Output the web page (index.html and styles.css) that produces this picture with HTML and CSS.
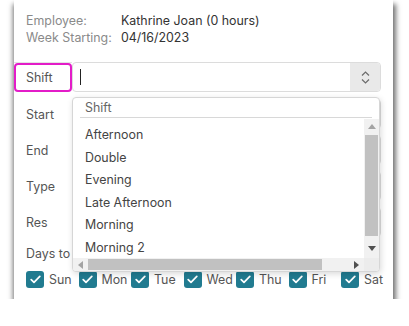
FILE: index.html
```html
<!DOCTYPE html>
<html lang="en">
<head>
<meta charset="utf-8">
<title>Shift</title>
<link rel="stylesheet" href="styles.css">
</head>
<body>
<div class="page">
  <div class="panel">
    <div class="info">
      <span class="k">Employee:</span><span class="v">Kathrine Joan (0 hours)</span>
      <span class="k">Week Starting:</span><span class="v">04/16/2023</span>
    </div>
    <div class="form">
      <div class="row row-shift">
        <div class="lbl-wrap"><label class="lbl hl">Shift</label></div>
        <div class="select">
          <div class="sel-input"><span class="caret"></span></div>
          <div class="sel-btn">
            <svg width="9" height="13" viewBox="0 0 9 13"><path d="M1 4.5 L4.5 1 L8 4.5 M1 8.5 L4.5 12 L8 8.5" stroke="#6b6b6b" stroke-width="1.2" fill="none"/></svg>
          </div>
          <div class="dropdown">
            <div class="dd-search"><div class="dd-input">Shift</div></div>
            <div class="dd-body">
              <div class="dd-list">
                <div class="item">Afternoon</div>
                <div class="item">Double</div>
                <div class="item">Evening</div>
                <div class="item">Late Afternoon</div>
                <div class="item">Morning</div>
                <div class="item">Morning 2</div>
              </div>
              <div class="vbar">
                <div class="vbtn"><svg width="8" height="5" viewBox="0 0 8 5"><polygon points="0,5 4,0 8,5" fill="#a3a3a3"/></svg></div>
                <div class="vtrack"><div class="vthumb"></div></div>
                <div class="vbtn vbtn-down"><svg width="8" height="5" viewBox="0 0 8 5"><polygon points="0,0 4,5 8,0" fill="#505050"/></svg></div>
              </div>
              <div class="hbar">
                <div class="hbtn"><svg width="5" height="8" viewBox="0 0 5 8"><polygon points="5,0 0,4 5,8" fill="#a3a3a3"/></svg></div>
                <div class="hthumb"></div>
                <div class="hspace"></div>
                <div class="hbtn"><svg width="5" height="8" viewBox="0 0 5 8"><polygon points="0,0 5,4 0,8" fill="#505050"/></svg></div>
              </div>
              <div class="corner"></div>
            </div>
          </div>
        </div>
      </div>
      <div class="row"><label class="lbl">Start</label><div class="field"></div></div>
      <div class="row"><label class="lbl">End</label><div class="field"></div></div>
      <div class="row"><label class="lbl">Type</label><div class="field"></div></div>
      <div class="row"><label class="lbl">Res</label><div class="field"></div></div>
      <div class="days-label">Days to</div>
      <div class="days">
        <div class="day"><span class="cb"><svg width="11" height="9" viewBox="0 0 11 9"><path d="M1.2 4.6 L4 7.4 L9.8 1.4" stroke="#fff" stroke-width="1.7" fill="none" stroke-linecap="round" stroke-linejoin="round"/></svg></span>Sun</div>
        <div class="day"><span class="cb"><svg width="11" height="9" viewBox="0 0 11 9"><path d="M1.2 4.6 L4 7.4 L9.8 1.4" stroke="#fff" stroke-width="1.7" fill="none" stroke-linecap="round" stroke-linejoin="round"/></svg></span>Mon</div>
        <div class="day"><span class="cb"><svg width="11" height="9" viewBox="0 0 11 9"><path d="M1.2 4.6 L4 7.4 L9.8 1.4" stroke="#fff" stroke-width="1.7" fill="none" stroke-linecap="round" stroke-linejoin="round"/></svg></span>Tue</div>
        <div class="day"><span class="cb"><svg width="11" height="9" viewBox="0 0 11 9"><path d="M1.2 4.6 L4 7.4 L9.8 1.4" stroke="#fff" stroke-width="1.7" fill="none" stroke-linecap="round" stroke-linejoin="round"/></svg></span>Wed</div>
        <div class="day"><span class="cb"><svg width="11" height="9" viewBox="0 0 11 9"><path d="M1.2 4.6 L4 7.4 L9.8 1.4" stroke="#fff" stroke-width="1.7" fill="none" stroke-linecap="round" stroke-linejoin="round"/></svg></span>Thu</div>
        <div class="day"><span class="cb"><svg width="11" height="9" viewBox="0 0 11 9"><path d="M1.2 4.6 L4 7.4 L9.8 1.4" stroke="#fff" stroke-width="1.7" fill="none" stroke-linecap="round" stroke-linejoin="round"/></svg></span>Fri</div>
        <div class="day"><span class="cb"><svg width="11" height="9" viewBox="0 0 11 9"><path d="M1.2 4.6 L4 7.4 L9.8 1.4" stroke="#fff" stroke-width="1.7" fill="none" stroke-linecap="round" stroke-linejoin="round"/></svg></span>Sat</div>
      </div>
    </div>
  </div>
</div>
</body>
</html>
```

FILE: styles.css
```css
* { box-sizing: border-box; }

body {
  margin: 0;
  background: #fff;
  font-family: Inter, "Noto Sans", "Liberation Sans", sans-serif;
  font-size: 12.4px;
  color: #333;
}

.page {
  padding-left: 14px;
}

.panel {
  width: 379px;
  height: 299px;
  background: #fff;
  box-shadow: 1px 6px 5px 2px rgba(0, 0, 0, 0.55);
  padding-top: 12px;
}

.info {
  display: grid;
  grid-template-columns: 95px auto;
  line-height: 17px;
  padding-left: 12px;
}

.k { color: #8a8a8a; }
.v { color: #333; }

.form {
  margin-top: 16px;
  display: flex;
  flex-direction: column;
}

.row {
  display: grid;
  grid-template-columns: 58px 309px;
  height: 30px;
  margin-bottom: 6px;
}

.row-shift {
  margin-bottom: 7px;
  position: relative;
  z-index: 2;
}

.lbl-wrap {
  border-top: 1px solid #e3e3e3;
  display: flex;
}

.lbl {
  padding-left: 12px;
  display: flex;
  align-items: center;
  color: #555;
}

.lbl.hl {
  flex: 1;
  border: 2px solid #e31cc8;
  border-radius: 4px;
  padding-left: 10px;
}

.field {
  border: 1px solid #dcdcdc;
  border-radius: 4px;
}

.select {
  position: relative;
  display: flex;
  height: 30px;
  border: 1px solid #dcdcdc;
  border-radius: 4px;
}

.sel-input {
  flex: 1;
  display: flex;
  align-items: center;
  padding-left: 7px;
}

.caret {
  width: 1px;
  height: 16px;
  background: #222;
}

.sel-btn {
  width: 30px;
  background: #e9e9e9;
  display: flex;
  align-items: center;
  justify-content: center;
  border-radius: 0 3px 3px 0;
}

.dropdown {
  position: absolute;
  top: 34px;
  left: -1px;
  width: 308px;
  height: 175px;
  border: 1px solid #d6d6d6;
  border-radius: 4px;
  background: #fff;
  box-shadow: 1px 2px 6px rgba(0, 0, 0, 0.15);
  overflow: hidden;
  display: flex;
  flex-direction: column;
}

.dd-search {
  height: 21px;
  padding: 0 7px;
}

.dd-input {
  height: 20px;
  line-height: 19px;
  border-bottom: 1px solid #d8d8d8;
  padding-left: 5px;
  color: #666;
}

.dd-body {
  display: grid;
  grid-template-columns: 291px 15px;
  grid-template-rows: 139px 13px;
}

.dd-list {
  padding-top: 5px;
  overflow: hidden;
}

.item {
  padding-left: 12px;
  line-height: 22.5px;
  white-space: nowrap;
  color: #444;
}

.vbar {
  background: #f1f1f1;
  display: flex;
  flex-direction: column;
}

.vbtn {
  height: 15px;
  display: flex;
  align-items: center;
  justify-content: center;
}

.vbtn-down {
  height: 17px;
  align-items: flex-start;
  padding-top: 5px;
}

.vtrack {
  flex: 1;
  padding: 1px 1px 0;
}

.vthumb {
  height: 101px;
  background: #c1c1c1;
}

.hbar {
  background: #f1f1f1;
  display: flex;
  align-items: center;
}

.hbtn {
  width: 15px;
  height: 13px;
  display: flex;
  align-items: center;
  justify-content: center;
}

.hthumb {
  width: 234px;
  height: 11px;
  background: #c1c1c1;
}

.hspace { flex: 1; }

.corner { background: #ececec; }

.days-label {
  margin-top: 3px;
  height: 16px;
  line-height: 16px;
  padding-left: 12px;
  color: #555;
}

.days {
  display: grid;
  grid-template-columns: repeat(7, 52.5px);
  padding-left: 12px;
  margin-top: 8px;
}

.day {
  display: flex;
  align-items: center;
  color: #555;
  height: 18px;
}

.cb {
  width: 18px;
  height: 17px;
  border-radius: 3px;
  background: #217b90;
  display: flex;
  align-items: center;
  justify-content: center;
  margin-right: 5px;
}
```
